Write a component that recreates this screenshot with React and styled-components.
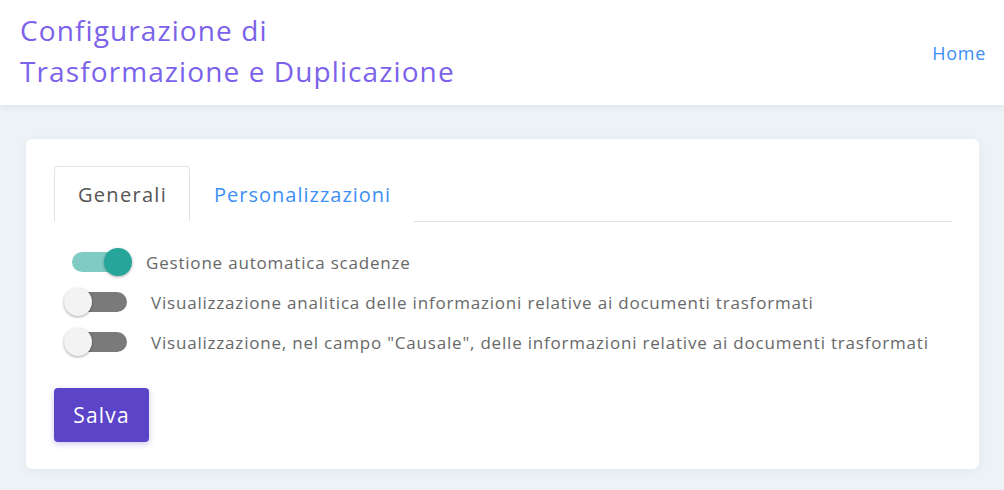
import React, { useState } from 'react';
import styled, { createGlobalStyle } from 'styled-components';

const GlobalStyle = createGlobalStyle`
    body {
        margin: 0;
        background-color: #edf2f6;
        font-family: "Open Sans", "Liberation Sans", sans-serif;
    }
`;

const Header = styled.header`
    display: flex;
    align-items: center;
    justify-content: space-between;
    height: 105px;
    padding: 0 18px 0 20px;
    background-color: #fff;
    box-shadow: 0 2px 6px rgba(20, 40, 80, 0.07);
`;

const Title = styled.h1`
    margin: 0 0 4px;
    font-size: 28px;
    font-weight: 400;
    letter-spacing: 1.1px;
    line-height: 41px;
    color: #7b62ea;
`;

const HomeLink = styled.a`
    font-size: 18px;
    letter-spacing: 0.7px;
    color: #3c8ff5;
    text-decoration: none;
    cursor: pointer;
`;

const Main = styled.main`
    padding: 34px 25px 20px 26px;
`;

const Card = styled.section`
    background-color: #fff;
    border-radius: 6px;
    padding: 27px 27px 27px 28px;
    box-shadow: 0 2px 10px rgba(30, 60, 100, 0.06);
`;

const Tabs = styled.nav`
    display: flex;
    border-bottom: 1px solid #dfe3e8;
`;

const Tab = styled.button`
    height: 56px;
    margin-bottom: -1px;
    padding: 0 22px 0 23px;
    font-family: inherit;
    font-size: 20px;
    letter-spacing: ${({ active }) => active ? '1.3px' : '1px'};
    color: ${({ active }) => active ? '#555' : '#3c8ff5'};
    background-color: #fff;
    border: 1px solid ${({ active }) => active ? '#dfe3e8' : 'transparent'};
    border-bottom-color: ${({ active }) => active ? '#fff' : 'transparent'};
    border-radius: 4px 4px 0 0;
    cursor: pointer;
`;

const Options = styled.div`
    display: flex;
    flex-direction: column;
    gap: 12px;
    margin-top: 26px;
`;

const Row = styled.label`
    display: flex;
    align-items: center;
    height: 28px;
    padding-left: 10px;
    cursor: pointer;
`;

const SwitchBox = styled.span`
    position: relative;
    flex: 0 0 68px;
    height: 28px;
`;

const Track = styled.span`
    position: absolute;
    left: 8px;
    top: 4px;
    width: 55px;
    height: 20px;
    border-radius: 10px;
    background-color: ${({ on }) => on ? '#80cbc4' : '#7a7a7a'};
`;

const Thumb = styled.span`
    position: absolute;
    top: 0;
    left: ${({ on }) => on ? '40px' : '0'};
    width: 28px;
    height: 28px;
    border-radius: 50%;
    background-color: ${({ on }) => on ? '#26a69a' : '#f3f3f3'};
    box-shadow: 0 1px 3px rgba(0, 0, 0, 0.35);
    transition: left 0.2s;
`;

const Label = styled.span`
    margin-left: ${({ on }) => on ? '14px' : '19px'};
    font-size: 17px;
    letter-spacing: 0.8px;
    color: #686868;
`;

const SaveButton = styled.button`
    margin-top: 32px;
    width: 95px;
    height: 54px;
    font-family: inherit;
    font-size: 21px;
    letter-spacing: 1.2px;
    color: #fff;
    background-color: #5b44c8;
    border: none;
    border-radius: 4px;
    box-shadow: 0 2px 6px rgba(91, 68, 200, 0.3);
    cursor: pointer;
`;

const Switch = ({ on }) => (
    <SwitchBox>
        <Track on={on} />
        <Thumb on={on} />
    </SwitchBox>
);

const options = [
    'Gestione automatica scadenze',
    'Visualizzazione analitica delle informazioni relative ai documenti trasformati',
    'Visualizzazione, nel campo "Causale", delle informazioni relative ai documenti trasformati',
];

const App = () => {
    const [values, setValues] = useState([true, false, false]);
    const [tab, setTab] = useState(0);

    const toggle = i => setValues(v => v.map((x, j) => j === i ? !x : x));

    return (
        <>
            <GlobalStyle />
            <Header>
                <Title>Configurazione di<br />Trasformazione e Duplicazione</Title>
                <HomeLink>Home</HomeLink>
            </Header>
            <Main>
                <Card>
                    <Tabs>
                        <Tab active={tab === 0} onClick={() => setTab(0)}>Generali</Tab>
                        <Tab active={tab === 1} onClick={() => setTab(1)}>Personalizzazioni</Tab>
                    </Tabs>
                    <Options>
                        {options.map((text, i) => (
                            <Row key={i} onClick={() => toggle(i)}>
                                <Switch on={values[i]} />
                                <Label on={values[i]}>{text}</Label>
                            </Row>
                        ))}
                    </Options>
                    <SaveButton>Salva</SaveButton>
                </Card>
            </Main>
        </>
    );
};

export default App;
